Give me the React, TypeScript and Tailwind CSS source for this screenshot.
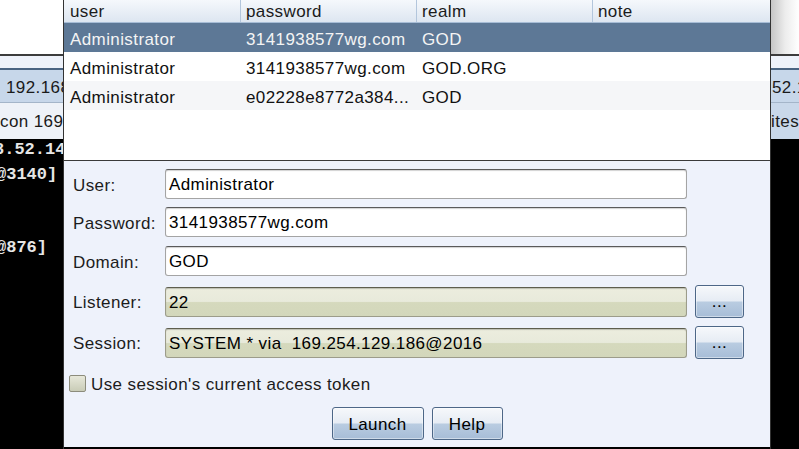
import clsx from 'clsx'

interface Credential {
  user: string
  password: string
  realm: string
  note: string
}

const credentials: Credential[] = [
  { user: 'Administrator', password: '3141938577wg.com', realm: 'GOD', note: '' },
  { user: 'Administrator', password: '3141938577wg.com', realm: 'GOD.ORG', note: '' },
  { user: 'Administrator', password: 'e02228e8772a384...', realm: 'GOD', note: '' },
]

const columns = ['user', 'password', 'realm', 'note']

function Backdrop({ side }: { side: 'left' | 'right' }) {
  const left = side === 'left'
  return (
    <div className={clsx('flex shrink-0 flex-col overflow-hidden', left ? 'w-[63px]' : 'w-[28px]')}>
      <div
        className={clsx(
          'h-[54px]',
          left ? 'bg-white' : 'bg-linear-to-r from-[#c6c6c6] via-[#ececec] to-white',
        )}
      />
      <div className="h-[2px] bg-[#3c3c3c]" />
      <div className="h-[12px] bg-[#eef2fa]" />
      <div className="h-[2px] bg-[#4a6482]" />
      <div
        className={clsx(
          'flex h-[32px] items-center whitespace-nowrap bg-[#c7d7ea] pt-[4px] text-[#1a1a1a]',
          left ? 'pl-[6px]' : 'pl-px',
        )}
      >
        {left ? '192.168' : '52.1'}
      </div>
      <div className="h-px bg-[#a4b5c9]" />
      <div
        className={clsx(
          'flex h-[36px] items-center whitespace-nowrap pt-px text-[#1a1a1a]',
          left ? 'bg-[#eef2f8]' : 'bg-[#c9d8ea]',
        )}
      >
        {left ? 'con 169.' : 'ites'}
      </div>
      <div className="flex-1 bg-black">
        {left && (
          <div className="-mt-[1px] whitespace-pre font-['Liberation_Mono',monospace] text-[17px] font-bold leading-[24.5px] tracking-normal text-[#e6e6e6]">
            <div className="-ml-[6px]">8.52.145</div>
            <div className="-ml-[4px]">@3140]</div>
            <div> </div>
            <div> </div>
            <div className="-ml-[4px]">@876]</div>
          </div>
        )}
      </div>
    </div>
  )
}

function CredentialTable() {
  return (
    <div className="h-[161px] border-b border-[#3a3a3a] bg-white">
      <div className="grid h-[23px] grid-cols-[176px_176px_176px_1fr] border-b border-[#a7bdd6] bg-linear-to-b from-[#f5f8fc] to-[#dde6f1] text-[#1b1b1b]">
        {columns.map((name, i) => (
          <div
            key={name}
            className={clsx(
              'flex items-center pt-px',
              i === 0 ? 'pl-[6px]' : 'border-l border-[#b3c6dc] pl-[5px]',
            )}
          >
            {name}
          </div>
        ))}
      </div>
      {credentials.map((row, i) => (
        <div
          key={i}
          className={clsx(
            'grid h-[29px] grid-cols-[176px_176px_176px_1fr] items-center pt-[4px]',
            i === 0 && 'bg-[#5d7896] text-[#f4f4f4]',
            i === 1 && 'bg-white text-[#111]',
            i === 2 && 'bg-[#f5f6f8] text-[#111]',
          )}
        >
          <div className="whitespace-nowrap pl-[6px]">{row.user}</div>
          <div className="whitespace-nowrap pl-[6px]">{row.password}</div>
          <div className="whitespace-nowrap pl-[6px]">{row.realm}</div>
          <div className="whitespace-nowrap pl-[6px]">{row.note}</div>
        </div>
      ))}
    </div>
  )
}

function Field({ value, tinted = false }: { value: string; tinted?: boolean }) {
  return (
    <div
      className={clsx(
        'flex h-[30px] w-[522px] items-center whitespace-pre rounded-[3px] border pl-[3px] pt-[2px] text-black',
        tinted
          ? 'border-[#9c9c8a] border-t-[#5e5e4e] bg-[linear-gradient(to_bottom,#ecedde_0%,#e8eadb_48%,#d5d9bd_52%,#d3d7bb_100%)] shadow-[inset_0_1px_1px_rgba(0,0,0,0.2)]'
          : 'border-[#a4a4a4] border-t-[#5a5a5a] bg-white shadow-[inset_0_1px_1px_rgba(0,0,0,0.18)]',
      )}
    >
      {value}
    </div>
  )
}

function BlueButton({ label, className }: { label: string; className: string }) {
  return (
    <button
      className={clsx(
        'flex h-[33px] shrink-0 items-center justify-center rounded-[3px] border border-[#4d6787] bg-[linear-gradient(to_bottom,#f6f8fb_0%,#e6ecf4_48%,#b9cce1_52%,#a7bdd7_100%)] text-black shadow-[inset_0_0_0_1px_rgba(255,255,255,0.45)]',
        className,
      )}
    >
      {label}
    </button>
  )
}

function FormRow({ label, children, className }: { label: string; children: React.ReactNode; className?: string }) {
  return (
    <div className={clsx('flex items-center pl-[9px]', className)}>
      <div className="w-[92px] shrink-0 pt-[3px] text-[#1c1c1c]">{label}</div>
      {children}
    </div>
  )
}

function LaunchForm() {
  return (
    <div className="flex h-[286px] flex-col bg-[#eef2fb] pt-2">
      <FormRow label="User:" className="h-[30px]">
        <Field value="Administrator" />
      </FormRow>
      <FormRow label="Password:" className="mt-2 h-[30px]">
        <Field value="3141938577wg.com" />
      </FormRow>
      <FormRow label="Domain:" className="mt-[9px] h-[30px]">
        <Field value="GOD" />
      </FormRow>
      <FormRow label="Listener:" className="mt-[9px] h-[33px]">
        <Field value="22" tinted />
        <BlueButton label="..." className="ml-2 w-[49px] pt-px" />
      </FormRow>
      <FormRow label="Session:" className="mt-2 h-[33px]">
        <Field value="SYSTEM * via  169.254.129.186@2016" tinted />
        <BlueButton label="..." className="ml-2 w-[49px] pt-px" />
      </FormRow>
      <label className="mt-4 flex h-[17px] items-center gap-[5px] pl-[5px] text-[#1c1c1c]">
        <span className="h-[17px] w-[17px] shrink-0 rounded-[2px] border border-[#8c8c7c] bg-linear-to-b from-[#e7e8da] to-[#c9ccb7]" />
        <span className="whitespace-nowrap pt-[3px]">Use session's current access token</span>
      </label>
      <div className="mt-[15px] flex justify-center gap-2">
        <BlueButton label="Launch" className="w-[92px] pt-[3px]" />
        <BlueButton label="Help" className="w-[71px] pt-[3px]" />
      </div>
    </div>
  )
}

export default function App() {
  return (
    <div className="flex h-[449px] w-[799px] overflow-hidden bg-black font-['Liberation_Sans',Arial,sans-serif] text-[17px] leading-[1.15] tracking-[0.4px]">
      <Backdrop side="left" />
      <div className="flex w-[708px] shrink-0 flex-col border-x border-[#333] bg-black">
        <CredentialTable />
        <LaunchForm />
      </div>
      <Backdrop side="right" />
    </div>
  )
}
